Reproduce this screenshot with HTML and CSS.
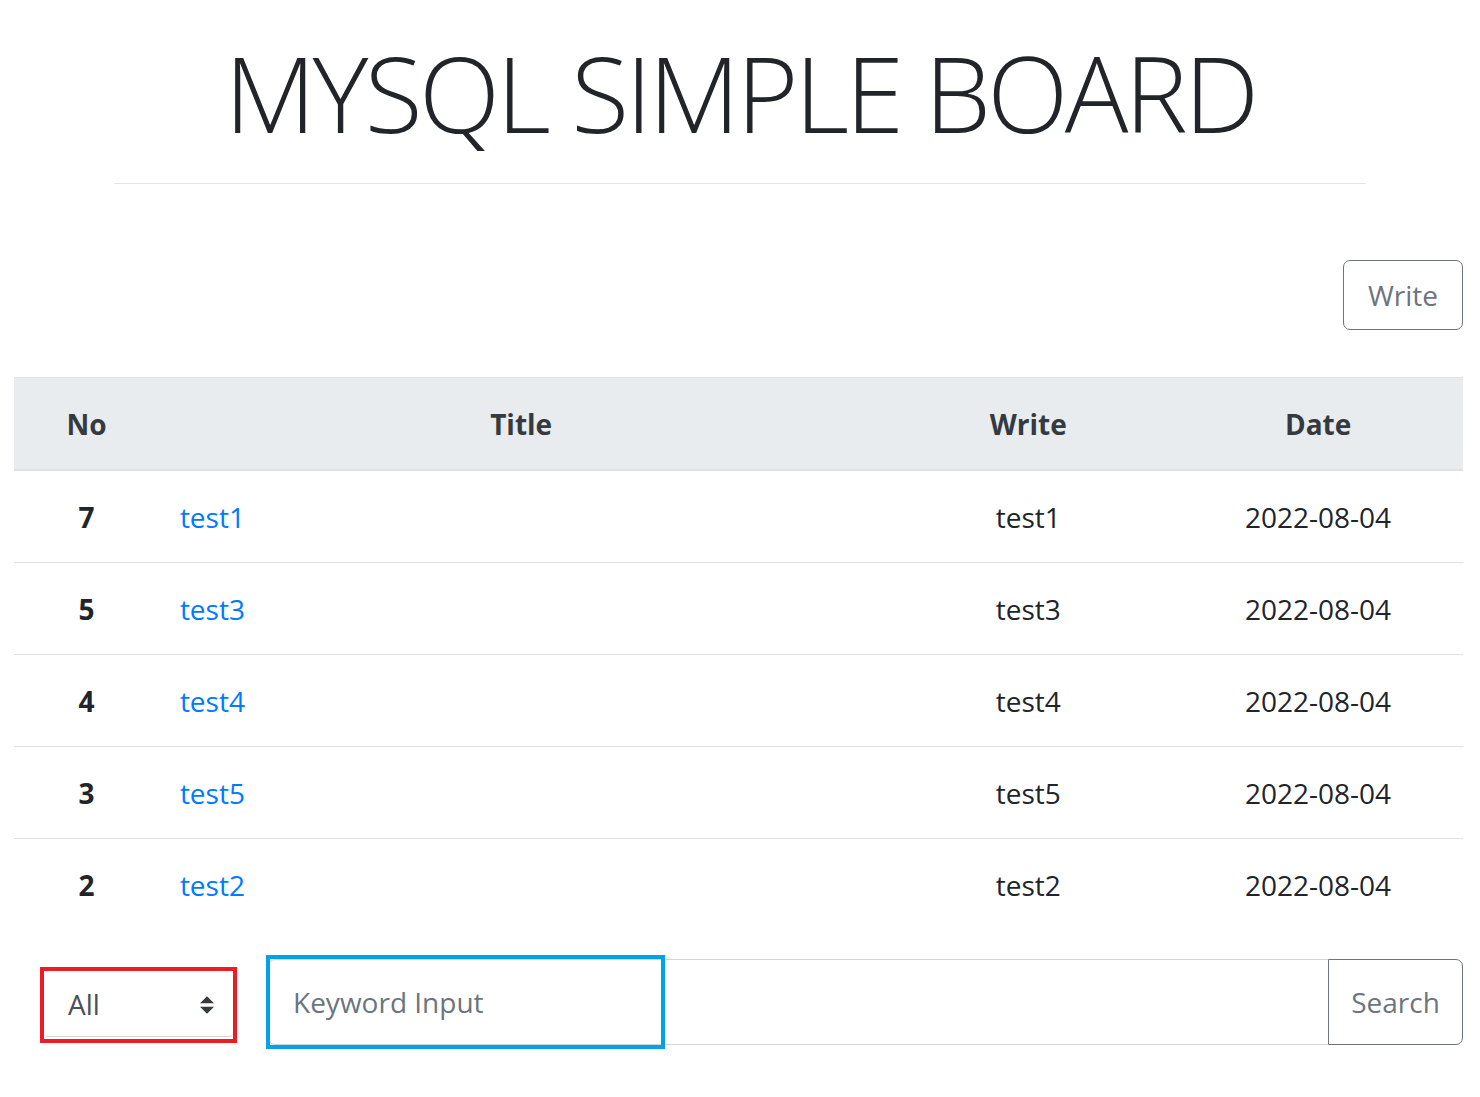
FILE: index.html
```html
<!DOCTYPE html>
<html lang="en">
<head>
  <meta charset="UTF-8" />
  <meta name="viewport" content="width=device-width, initial-scale=1.0" />
  <title>MySQL Simple Board</title>
  <link rel="stylesheet" href="styles.css">
</head>
<body>
  <div class="board-head">
    <h1 class="board-title">MYSQL SIMPLE BOARD</h1>
    <hr>
  </div>

  <div class="board">
    <div class="toolbar">
      <a href="#write" class="btn btn-outline">Write</a>
    </div>

    <table class="board-table">
      <thead>
        <tr>
          <th class="col-no">No</th>
          <th class="col-title">Title</th>
          <th class="col-writer">Write</th>
          <th class="col-date">Date</th>
        </tr>
      </thead>
      <tbody>
        <tr>
          <td class="col-no">7</td>
          <td class="col-title"><a href="#7">test1</a></td>
          <td class="col-writer">test1</td>
          <td class="col-date">2022-08-04</td>
        </tr>
        <tr>
          <td class="col-no">5</td>
          <td class="col-title"><a href="#5">test3</a></td>
          <td class="col-writer">test3</td>
          <td class="col-date">2022-08-04</td>
        </tr>
        <tr>
          <td class="col-no">4</td>
          <td class="col-title"><a href="#4">test4</a></td>
          <td class="col-writer">test4</td>
          <td class="col-date">2022-08-04</td>
        </tr>
        <tr>
          <td class="col-no">3</td>
          <td class="col-title"><a href="#3">test5</a></td>
          <td class="col-writer">test5</td>
          <td class="col-date">2022-08-04</td>
        </tr>
        <tr>
          <td class="col-no">2</td>
          <td class="col-title"><a href="#2">test2</a></td>
          <td class="col-writer">test2</td>
          <td class="col-date">2022-08-04</td>
        </tr>
      </tbody>
    </table>

    <!-- Search -->
    <form class="search-form" onsubmit="return false;">
      <div class="select-mark">
        <select class="search-type">
          <option>All</option>
          <option>Title</option>
          <option>Write</option>
        </select>
        <svg class="select-arrows" width="14" height="18" viewBox="0 0 4 5">
          <path d="M2 0L0 2h4zm0 5L0 3h4z" fill="#343a40"/>
        </svg>
      </div>
      <div class="search-group">
        <input type="text" class="search-input" placeholder="Keyword Input">
        <div class="input-mark"></div>
        <button type="submit" class="btn btn-outline btn-search">Search</button>
      </div>
    </form>
  </div>
</body>
</html>
```

FILE: styles.css
```css
body {
  margin: 0;
  font-family: "Open Sans", "Noto Sans", "Liberation Sans", sans-serif;
  font-size: 28px;
  line-height: 1.5;
  color: #212529;
  background: #fff;
}

/* Title block */
.board-head {
  width: 1252px;
  margin: 0 auto;
  padding-top: 29px;
}

.board-title {
  margin: 0;
  font-size: 106px;
  font-weight: 300;
  line-height: 1.2;
  letter-spacing: -3.6px;
  text-align: center;
  color: #212529;
}

.board-head hr {
  margin: 27px 0 0;
  border: 0;
  border-top: 1px solid rgba(0, 0, 0, 0.1);
}

.board {
  margin: 0 17px 0 14px;
  padding-bottom: 52px;
}

.toolbar {
  display: flex;
  justify-content: flex-end;
  margin-top: 76px;
  margin-bottom: 47px;
}

/* Buttons */
.btn {
  display: inline-block;
  padding: 13px 24px;
  font-family: inherit;
  font-size: 28px;
  line-height: 42px;
  color: #6c757d;
  background: #fff;
  border: 1px solid #6c757d;
  border-radius: 7px;
  text-decoration: none;
  cursor: pointer;
}

.btn-outline:hover {
  color: #fff;
  background: #6c757d;
}

/* Table */
.board-table {
  width: 100%;
  border-collapse: collapse;
  table-layout: fixed;
}

.board-table th,
.board-table td {
  box-sizing: border-box;
  padding: 26px 21px 24px;
  line-height: 41px;
  text-align: center;
}

.board-table th {
  font-weight: 700;
  color: #343a40;
  background: #e9ecef;
  border-top: 1px solid #dee2e6;
  border-bottom: 2px solid #dee2e6;
}

.board-table td {
  border-top: 1px solid #dee2e6;
}

.board-table tbody tr:first-child td {
  border-top: 0;
}

.col-no { width: 10%; }
.col-title { width: 50%; }
.col-writer { width: 20%; }
.col-date { width: 20%; }

.board-table td.col-no {
  font-weight: 700;
}

.board-table td.col-title {
  text-align: left;
}

.board-table td a {
  color: #007bff;
  text-decoration: none;
}

.board-table td a:hover {
  text-decoration: underline;
}

/* Search */
.search-form {
  display: flex;
  align-items: center;
  margin-top: 29px;
  padding-left: 26px;
}

.select-mark {
  position: relative;
  width: 189px;
  height: 68px;
  margin-top: 6px;
  border: 4px solid #ed1c24;
}

.search-type {
  appearance: none;
  -webkit-appearance: none;
  width: 100%;
  height: 66px;
  padding: 0 40px 0 24px;
  font-family: inherit;
  font-size: 28px;
  color: #495057;
  background: #fff;
  border: 0;
  border-bottom: 1px solid #d6d6d6;
  border-radius: 0 0 4px 4px;
  outline: none;
}

.select-arrows {
  position: absolute;
  right: 19px;
  top: 25px;
  pointer-events: none;
}

.search-group {
  position: relative;
  flex: 1;
  display: flex;
  height: 86px;
  margin-left: 31px;
}

.search-input {
  flex: 1;
  min-width: 0;
  padding: 0 24px;
  font-family: inherit;
  font-size: 28px;
  color: #495057;
  border: 1px solid #d4d4d4;
  border-right: 0;
  border-radius: 7px 0 0 7px;
  outline: none;
}

.search-input::placeholder {
  color: #6c757d;
}

/* blue highlight drawn over the keyword box */
.input-mark {
  position: absolute;
  z-index: 1;
  left: -2px;
  top: -4px;
  box-sizing: border-box;
  width: 399px;
  height: 94px;
  border: 4px solid #00a2e8;
  pointer-events: none;
}

.btn-search {
  width: 135px;
  padding: 0;
  text-align: center;
  border-radius: 0 7px 7px 0;
}
```
